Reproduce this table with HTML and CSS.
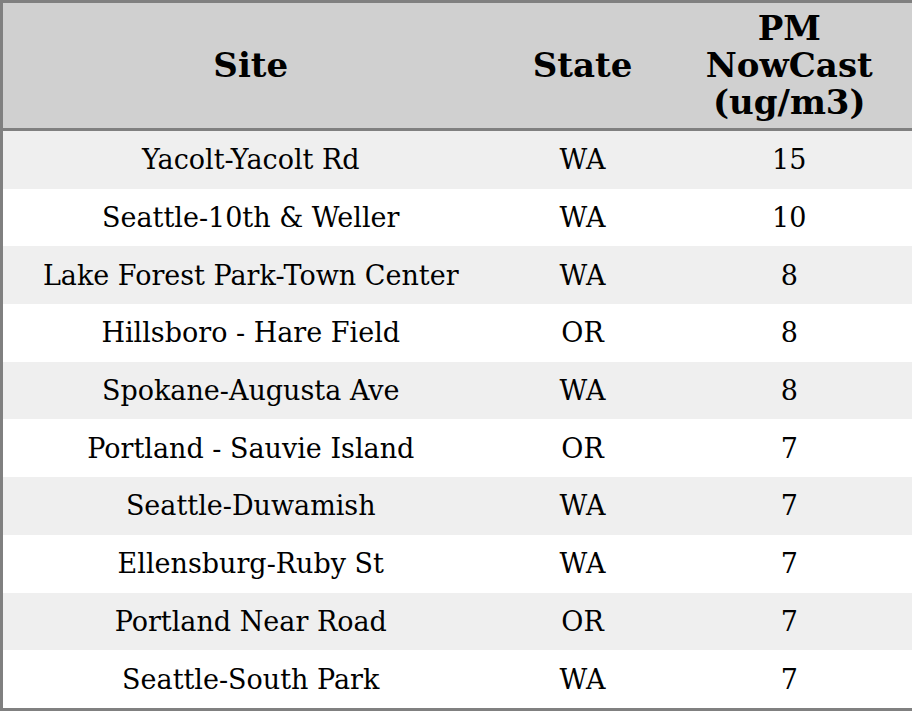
FILE: index.html
```html
<!DOCTYPE html>
<html>
<head>
<meta charset="utf-8">
<link rel="stylesheet" href="styles.css">
</head>
<body>
<table class="aq">
  <colgroup>
    <col class="c-site">
    <col class="c-state">
    <col class="c-pm">
  </colgroup>
  <thead>
    <tr><th>Site</th><th>State</th><th>PM<br>NowCast<br>(ug/m3)</th></tr>
  </thead>
  <tbody>
    <tr><td>Yacolt-Yacolt Rd</td><td>WA</td><td>15</td></tr>
    <tr><td>Seattle-10th &amp; Weller</td><td>WA</td><td>10</td></tr>
    <tr><td>Lake Forest Park-Town Center</td><td>WA</td><td>8</td></tr>
    <tr><td>Hillsboro - Hare Field</td><td>OR</td><td>8</td></tr>
    <tr><td>Spokane-Augusta Ave</td><td>WA</td><td>8</td></tr>
    <tr><td>Portland - Sauvie Island</td><td>OR</td><td>7</td></tr>
    <tr><td>Seattle-Duwamish</td><td>WA</td><td>7</td></tr>
    <tr><td>Ellensburg-Ruby St</td><td>WA</td><td>7</td></tr>
    <tr><td>Portland Near Road</td><td>OR</td><td>7</td></tr>
    <tr><td>Seattle-South Park</td><td>WA</td><td>7</td></tr>
  </tbody>
</table>
</body>
</html>
```

FILE: styles.css
```css
html, body {
  margin: 0;
  padding: 0;
  background: #ffffff;
}
.aq {
  width: 912px;
  height: 711px;
  border-collapse: collapse;
  border: 3px solid #808080;
  font-family: "DejaVu Serif", serif;
  color: #000;
  table-layout: fixed;
}
.c-site { width: 497px; }
.c-state { width: 168px; }
.c-pm { width: 247px; }
.aq th {
  background: #d0d0d0;
  font-size: 34px;
  font-weight: bold;
  line-height: 37px;
  padding: 7px 0 7px;
  text-align: center;
  border-bottom: 3px solid #808080;
}
.aq td {
  font-size: 27px;
  text-align: center;
  padding: 0;
  height: 57.7px;
}
.aq tbody tr:nth-child(odd) td {
  background: #efefef;
}
```
